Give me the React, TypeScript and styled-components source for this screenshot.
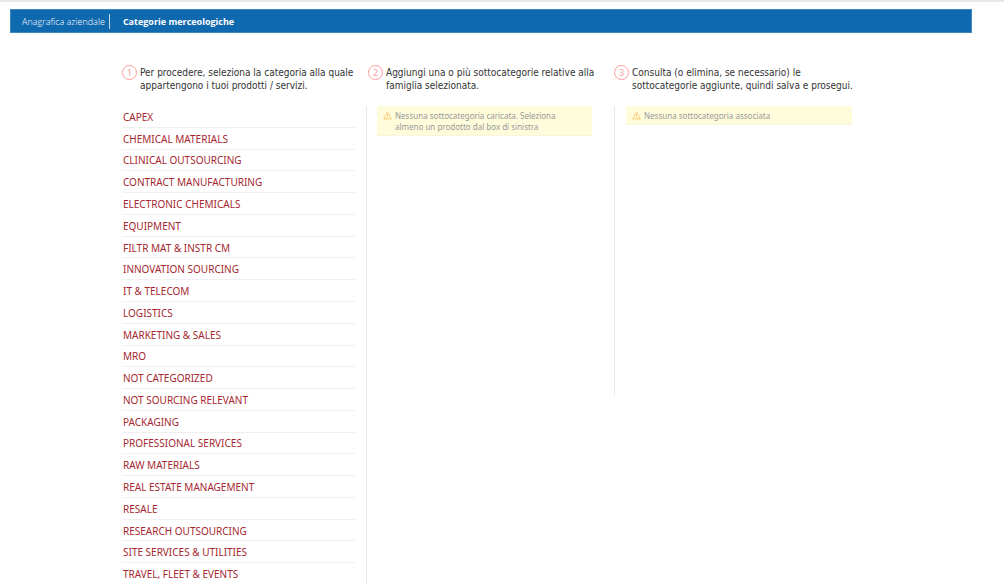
import React from "react";
import styled, { createGlobalStyle } from "styled-components";

const GlobalStyle = createGlobalStyle`
  *, *::before, *::after { box-sizing: border-box; }
  body {
    margin: 0;
    background: #fff;
    color: #333;
    font-family: "Noto Sans", sans-serif;
    font-size: 10px;
  }
`;

const Page = styled.div`
  border-top: 2px solid #e8e8e8;
  padding: 7px 32px 0 10px;
  height: 100vh;
  overflow: hidden;
`;

const TopBar = styled.nav`
  display: flex;
  align-items: center;
  height: 24px;
  padding: 0 11px;
  background: #0f69af;
  border: 1px solid #3e87bf;
  font-family: "Open Sans", sans-serif;
  font-size: 9px;
`;

const TopLink = styled.a<{ $active?: boolean }>`
  color: #fff;
  text-decoration: none;
  line-height: 15px;
  font-weight: ${(p) => (p.$active ? 700 : 300)};
  padding-left: ${(p) => (p.$active ? 13 : 0)}px;
  padding-right: ${(p) => (p.$active ? 0 : 4)}px;
  border-left: ${(p) => (p.$active ? "1px solid #c3daeb" : "0")};
`;

const Columns = styled.main`
  display: grid;
  grid-template-columns: minmax(0, 244fr) minmax(0, 248fr) minmax(0, 238fr);
  margin: 32px 120px 0 112px;
`;

const Column = styled.section`
  display: flex;
  flex-direction: column;
`;

const Step = styled.header<{ $inset?: boolean }>`
  display: flex;
  gap: 3px;
  height: 41px;
  padding-left: ${(p) => (p.$inset ? 2 : 0)}px;
`;

const StepNumber = styled.span`
  flex: none;
  width: 15px;
  height: 15px;
  border: 1px solid #ff9c9c;
  border-radius: 50%;
  color: #ff9c9c;
  font-size: 9px;
  line-height: 13px;
  text-align: center;
`;

const StepText = styled.h2`
  margin: 0;
  padding-top: 1px;
  font-family: "DejaVu Sans Condensed", "DejaVu Sans", sans-serif;
  font-size: 10px;
  font-weight: 400;
  line-height: 13px;
  white-space: nowrap;
`;

const Categories = styled.ul`
  display: grid;
  grid-auto-rows: 1fr;
  height: 479px;
  margin: 0 11px 0 0;
  padding: 0;
  list-style: none;
`;

const Category = styled.li`
  display: flex;
  align-items: center;
  padding: 1px 0 0 1px;
  border-bottom: 1px solid #f0f0f0;
`;

const CategoryLink = styled.a`
  color: #a52830;
  font-size: 10px;
  line-height: 14px;
  text-decoration: none;
`;

const Panel = styled.div<{ $full?: boolean }>`
  flex: ${(p) => (p.$full ? "1" : "none")};
  min-height: 290px;
  padding-left: ${(p) => (p.$full ? 10 : 11)}px;
  padding-right: ${(p) => (p.$full ? 22 : 0)}px;
  border-left: 1px solid #e8e8e8;
`;

const Notice = styled.p`
  display: flex;
  gap: 3px;
  margin: 0;
  padding: 4px 6px 3px;
  background: #fffcdc;
  border-bottom: 1px solid #f8f5dc;
  color: #999;
  font-size: 8px;
  line-height: 11px;
  white-space: nowrap;
`;

const WarningIcon = styled.svg`
  flex: none;
  width: 9px;
  height: 9px;
  margin-top: 1px;
`;

const Warning = () => (
  <WarningIcon viewBox="0 0 9 9" fill="none" stroke="#f9cf78" aria-hidden="true">
    <path d="M4.5 1 8.3 8H.7Z" strokeLinejoin="round" />
    <path d="M4.5 3.4v2M4.5 6v1" />
  </WarningIcon>
);

const categories = [
  "CAPEX", "CHEMICAL MATERIALS", "CLINICAL OUTSOURCING", "CONTRACT MANUFACTURING",
  "ELECTRONIC CHEMICALS", "EQUIPMENT", "FILTR MAT & INSTR CM", "INNOVATION SOURCING",
  "IT & TELECOM", "LOGISTICS", "MARKETING & SALES", "MRO", "NOT CATEGORIZED",
  "NOT SOURCING RELEVANT", "PACKAGING", "PROFESSIONAL SERVICES", "RAW MATERIALS",
  "REAL ESTATE MANAGEMENT", "RESALE", "RESEARCH OUTSOURCING",
  "SITE SERVICES & UTILITIES", "TRAVEL, FLEET & EVENTS",
];

export default function App() {
  return (
    <>
      <GlobalStyle />
      <Page>
        <TopBar>
          <TopLink href="#anagrafica">Anagrafica aziendale</TopLink>
          <TopLink href="#categorie" $active aria-current="page">Categorie merceologiche</TopLink>
        </TopBar>
        <Columns>
          <Column>
            <Step>
              <StepNumber>1</StepNumber>
              <StepText>Per procedere, seleziona la categoria alla quale<br />appartengono i tuoi prodotti / servizi.</StepText>
            </Step>
            <Categories>
              {categories.map((name) => (
                <Category key={name}><CategoryLink href="#sottocategorie">{name}</CategoryLink></Category>
              ))}
            </Categories>
          </Column>
          <Column>
            <Step $inset>
              <StepNumber>2</StepNumber>
              <StepText>Aggiungi una o più sottocategorie relative alla<br />famiglia selezionata.</StepText>
            </Step>
            <Panel $full>
              <Notice><Warning /><span>Nessuna sottocategoria caricata. Seleziona<br />almeno un prodotto dal box di sinistra</span></Notice>
            </Panel>
          </Column>
          <Column>
            <Step>
              <StepNumber>3</StepNumber>
              <StepText>Consulta (o elimina, se necessario) le<br />sottocategorie aggiunte, quindi salva e prosegui.</StepText>
            </Step>
            <Panel>
              <Notice><Warning /><span>Nessuna sottocategoria associata</span></Notice>
            </Panel>
          </Column>
        </Columns>
      </Page>
    </>
  );
}
